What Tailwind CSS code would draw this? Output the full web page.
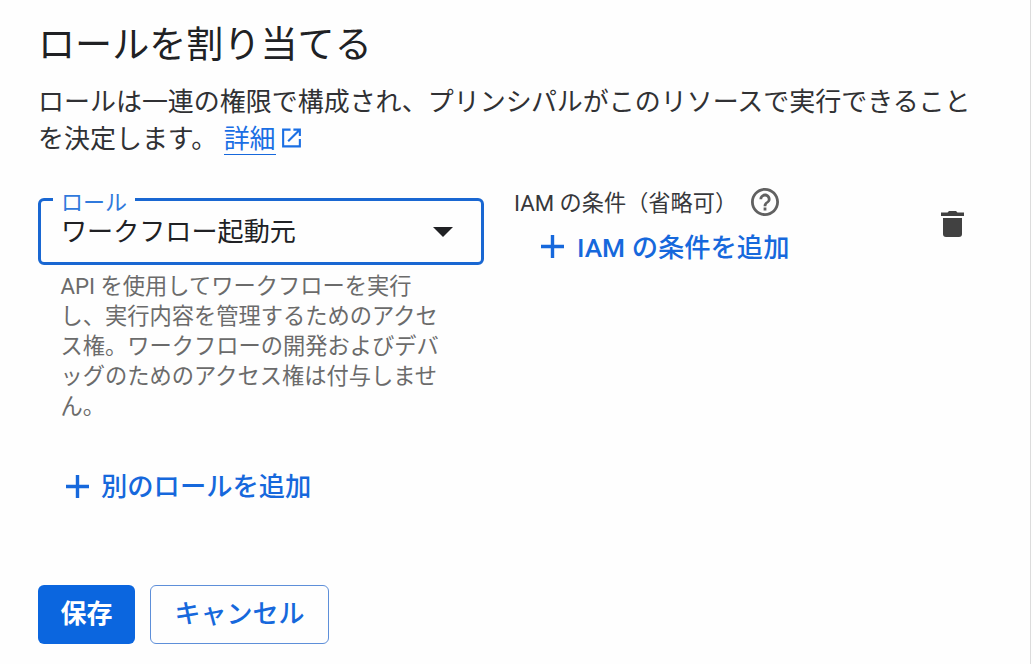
<!DOCTYPE html>
<html lang="ja">
<head>
  <meta charset="UTF-8" />
  <meta name="viewport" content="width=device-width, initial-scale=1.0"/>
  <title>ロールを割り当てる</title>
  <script src="https://cdn.jsdelivr.net/npm/@tailwindcss/browser@4"></script>
</head>
<body class="bg-[#fefefe] font-[Roboto,'Noto_Sans_CJK_JP',sans-serif] text-[#202124] overflow-hidden">

  <main class="w-[1031px] h-[664px] border-r border-[#dcdcdc] pl-[38px] pt-[19px]">

    <!-- Heading -->
    <h1 class="text-[37.1px] leading-[54px]">ロールを割り当てる</h1>
    <p class="mt-[11px] w-[950px] text-[25.98px] leading-[37px] text-[#303134]">
      ロールは一連の権限で構成され、プリンシパルがこのリソースで実行できること<br/>を決定します。
      <a href="#" class="inline-block h-[34px] leading-[37px] border-b-[1.5px] border-[#1668dc] text-[#1a6fe4] align-top">詳細</a><svg class="inline-block ml-[6px] mt-[7px] w-[19px] h-[20px] align-top text-[#1a6fe4]" viewBox="0 0 20 20" fill="none" stroke="currentColor" stroke-width="2.2">
        <path d="M9 1.2H1.2V18.8H18.8V11"/>
        <path d="M12 1.2H18.8V8M18.4 1.6L6.5 13.5"/>
      </svg>
    </p>

    <div class="mt-[40px] flex">

      <!-- Role select -->
      <div class="w-[446px]">
        <div class="relative flex items-center justify-between h-[67px] border-[3px] border-[#1967d2] rounded-md pl-5 pr-[28px]">
          <label class="absolute left-[12px] -top-[13px] bg-[#fefefe] px-2 text-[22px] leading-[30px] text-[#3079dc]">ロール</label>
          <span class="text-[26.1px] leading-[38px]">ワークフロー起動元</span>
          <svg class="w-[20px] h-[10px]" viewBox="0 0 20 10"><path d="M0 0H20L10 10Z" fill="#202124"/></svg>
        </div>
        <p class="mt-[7px] ml-[22.5px] w-[385px] text-[22.25px] leading-[29.9px] text-[#6b6b6b]">
          API を使用してワークフローを実行<br/>し、実行内容を管理するためのアクセ<br/>ス権。ワークフローの開発およびデバ<br/>ッグのためのアクセス権は付与しませ<br/>ん。
        </p>
      </div>

      <!-- IAM condition -->
      <div class="ml-[30px] -mt-[12px] w-[427px]">
        <div class="flex items-center h-[32px]">
          <span class="pt-px text-[22.2px] leading-[32px] text-[#37383b]">IAM の条件（省略可）</span>
          <svg class="ml-[14px] w-[28px] h-[28px]" viewBox="2 2 20 20" fill="#616161">
            <path d="M11 18h2v-2h-2v2zm1-16C6.48 2 2 6.48 2 12s4.48 10 10 10 10-4.48 10-10S17.52 2 12 2zm0 18c-4.41 0-8-3.59-8-8s3.59-8 8-8 8 3.59 8 8-3.59 8-8 8zm0-14c-2.21 0-4 1.79-4 4h2c0-1.1.9-2 2-2s2 .9 2 2c0 2-3 1.75-3 5h2c0-2.25 3-2.5 3-5 0-2.21-1.79-4-4-4z"/>
          </svg>
        </div>
        <button class="mt-[10px] ml-[27px] flex items-center h-[38px] text-[26.3px] font-medium text-[#1668dc]">
          <svg class="w-[23px] h-[23px] mr-[13px] -mt-[2px]" viewBox="0 0 23 23" stroke="currentColor" stroke-width="3.4"><path d="M0 11.5H23M11.5 0V23"/></svg>
          <span class="pt-[3px]">IAM の条件を追加</span>
        </button>
      </div>

      <button class="self-start mt-[13px]" aria-label="削除">
        <svg class="w-[23px] h-[26px]" viewBox="0 0 23 26" fill="#414141">
          <path d="M0 1.5H6.5L8 0H15L16.5 1.5H23V5H0Z"/>
          <path d="M2 7H21V23Q21 26 18 26H5Q2 26 2 23Z"/>
        </svg>
      </button>
    </div>

    <button class="mt-[46px] ml-[28px] flex items-center h-[38px] text-[26.3px] font-medium text-[#1668dc]">
      <svg class="w-[23px] h-[23px] mr-[12px] -mt-px" viewBox="0 0 23 23" stroke="currentColor" stroke-width="3.4"><path d="M0 11.5H23M11.5 0V23"/></svg>
      <span class="pt-[3px]">別のロールを追加</span>
    </button>

    <!-- Actions -->
    <div class="mt-[79px] flex gap-[15px] text-[26px]">
      <button class="w-[97px] h-[59px] rounded-md bg-[#0b66df] text-white font-bold">保存</button>
      <button class="w-[179px] h-[59px] rounded-md border border-[#5e8fd9] text-[#1668dc] font-medium">キャンセル</button>
    </div>
  </main>

</body>
</html>
